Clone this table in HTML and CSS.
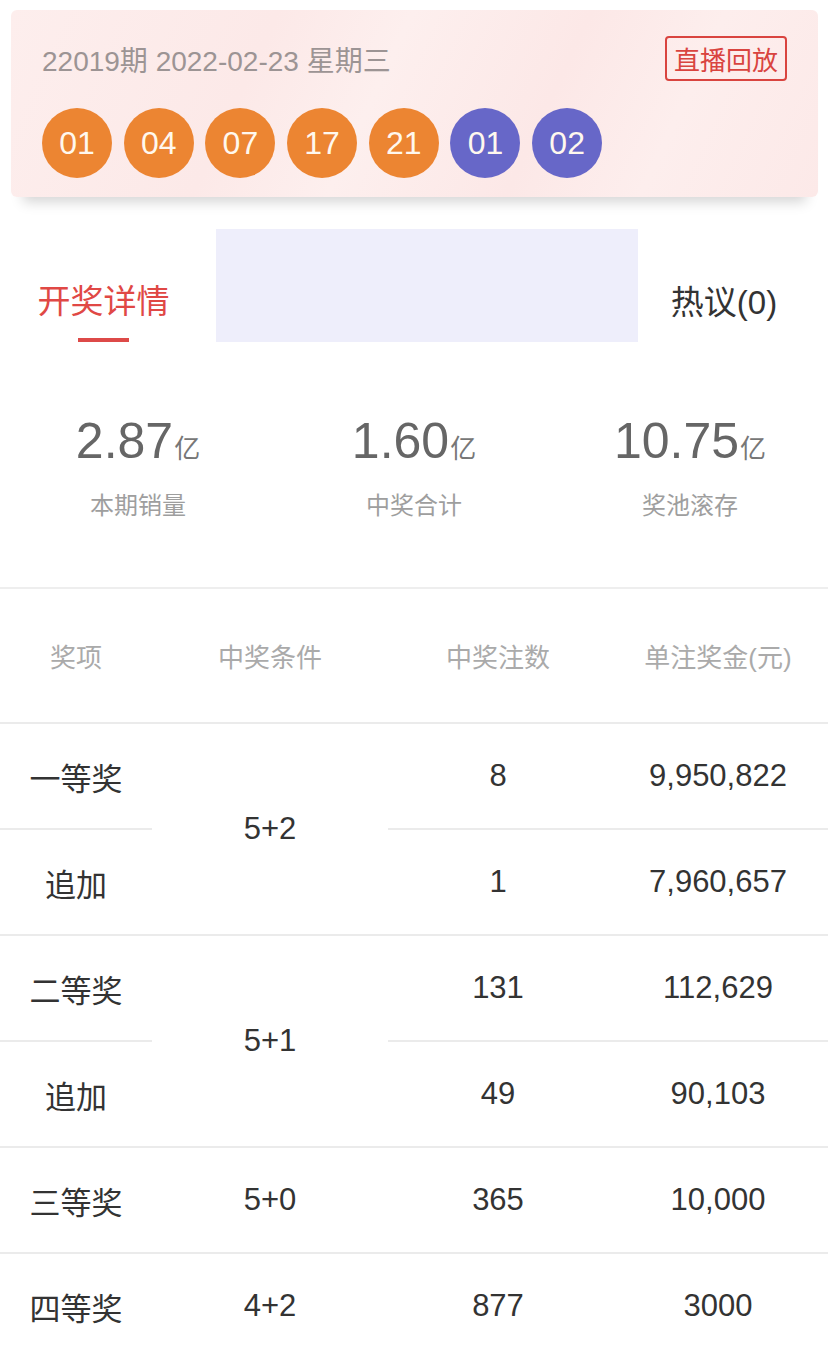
FILE: index.html
```html
<!DOCTYPE html>
<html lang="zh">
<head>
<meta charset="utf-8">
<title>开奖详情</title>
<link rel="stylesheet" href="styles.css">
</head>
<body>
<div class="card">
  <div class="card-head">
    <span class="issue">22019期 2022-02-23 星期三</span>
    <span class="replay">直播回放</span>
  </div>
  <div class="balls">
    <span class="ball red">01</span>
    <span class="ball red">04</span>
    <span class="ball red">07</span>
    <span class="ball red">17</span>
    <span class="ball red">21</span>
    <span class="ball blue">01</span>
    <span class="ball blue">02</span>
  </div>
</div>

<div class="tabs">
  <div class="tab active">
    <span class="tab-label">开奖详情</span>
    <span class="tab-bar"></span>
  </div>
  <div class="placeholder"></div>
  <div class="tab other">热议(0)</div>
</div>

<div class="stats">
  <div class="stat">
    <div class="stat-num">2.87<span class="unit">亿</span></div>
    <div class="stat-label">本期销量</div>
  </div>
  <div class="stat">
    <div class="stat-num">1.60<span class="unit">亿</span></div>
    <div class="stat-label">中奖合计</div>
  </div>
  <div class="stat">
    <div class="stat-num">10.75<span class="unit">亿</span></div>
    <div class="stat-label">奖池滚存</div>
  </div>
</div>

<div class="grid">
  <div class="th">奖项</div>
  <div class="th">中奖条件</div>
  <div class="th">中奖注数</div>
  <div class="th">单注奖金(元)</div>

  <div class="td line">一等奖</div>
  <div class="td line span2">5+2</div>
  <div class="td line">8</div>
  <div class="td line">9,950,822</div>
  <div class="td line">追加</div>
  <div class="td line">1</div>
  <div class="td line">7,960,657</div>

  <div class="td line">二等奖</div>
  <div class="td line span2">5+1</div>
  <div class="td line">131</div>
  <div class="td line">112,629</div>
  <div class="td line">追加</div>
  <div class="td line">49</div>
  <div class="td line">90,103</div>

  <div class="td line">三等奖</div>
  <div class="td line">5+0</div>
  <div class="td line">365</div>
  <div class="td line">10,000</div>

  <div class="td line">四等奖</div>
  <div class="td line">4+2</div>
  <div class="td line">877</div>
  <div class="td line">3000</div>
</div>
</body>
</html>
```

FILE: styles.css
```css
* { box-sizing: border-box; }

body {
  margin: 0;
  background: #ffffff;
  font-family: "Liberation Sans", "Noto Sans CJK SC", sans-serif;
  color: #333333;
}

.card {
  margin: 10px 10px 0 11px;
  height: 187px;
  padding: 26px 31px 19px 31px;
  border-radius: 6px;
  background: linear-gradient(115deg, #fdeeed 0%, #fce9e8 30%, #fdefee 45%, #fce8e7 65%, #fdeeed 80%, #fce9e8 100%);
  box-shadow: 0 17px 12px -12px rgba(0, 0, 0, 0.17);
}

.card-head {
  display: flex;
  justify-content: space-between;
  align-items: center;
  height: 45px;
}

.issue {
  font-size: 28px;
  color: #9c9494;
}

.replay {
  display: flex;
  align-items: center;
  justify-content: center;
  height: 45px;
  width: 122px;
  border: 2px solid #d9443f;
  border-radius: 4px;
  color: #d9443f;
  font-size: 26px;
}

.balls {
  display: flex;
  gap: 11.7px;
  margin-top: 27px;
}

.ball {
  width: 70px;
  height: 70px;
  border-radius: 50%;
  display: flex;
  align-items: center;
  justify-content: center;
  color: #fff8ee;
  font-size: 32px;
}

.ball.red { background: #ec8532; }
.ball.blue { background: #6767c8; }

.tabs {
  display: flex;
  margin-top: 32px;
  height: 113px;
}

.tab.active {
  width: 207px;
  display: flex;
  flex-direction: column;
  align-items: center;
  padding-top: 53px;
}

.tab-label {
  font-size: 33px;
  line-height: 40px;
  color: #e04845;
}

.tab-bar {
  margin-top: 16px;
  width: 51px;
  height: 5px;
  background: #dd4a48;
}

.placeholder {
  margin-left: 9px;
  width: 422px;
  height: 113px;
  background: #eeeefb;
}

.tab.other {
  flex: 1;
  display: flex;
  align-items: center;
  justify-content: center;
  padding-right: 18px;
  padding-top: 28px;
  font-size: 33px;
  color: #333333;
  height: 113px;
}

.stats {
  display: grid;
  grid-template-columns: repeat(3, 1fr);
  padding: 74px 0 69px;
  border-bottom: 2px solid #eeeeee;
}

.stat {
  display: flex;
  flex-direction: column;
  align-items: center;
}

.stat-num {
  font-size: 50px;
  line-height: 50px;
  height: 50px;
  color: #666666;
}

.unit {
  font-size: 26px;
  line-height: 26px;
  margin-left: 1px;
  color: #777777;
}

.stat-label {
  margin-top: 28px;
  font-size: 24px;
  line-height: 24px;
  color: #9e9e9e;
}

.grid {
  display: grid;
  grid-template-columns: 152px 236px 220px 220px;
  grid-template-rows: 133px;
  grid-auto-rows: 106px;
}

.th {
  display: flex;
  align-items: center;
  justify-content: center;
  font-size: 26px;
  color: #aaaaaa;
}

.td {
  display: flex;
  align-items: center;
  justify-content: center;
  font-size: 31px;
  color: #333333;
}

.td.line {
  border-top: 2px solid #ebebeb;
}

.span2 {
  grid-row: span 2;
}
```
